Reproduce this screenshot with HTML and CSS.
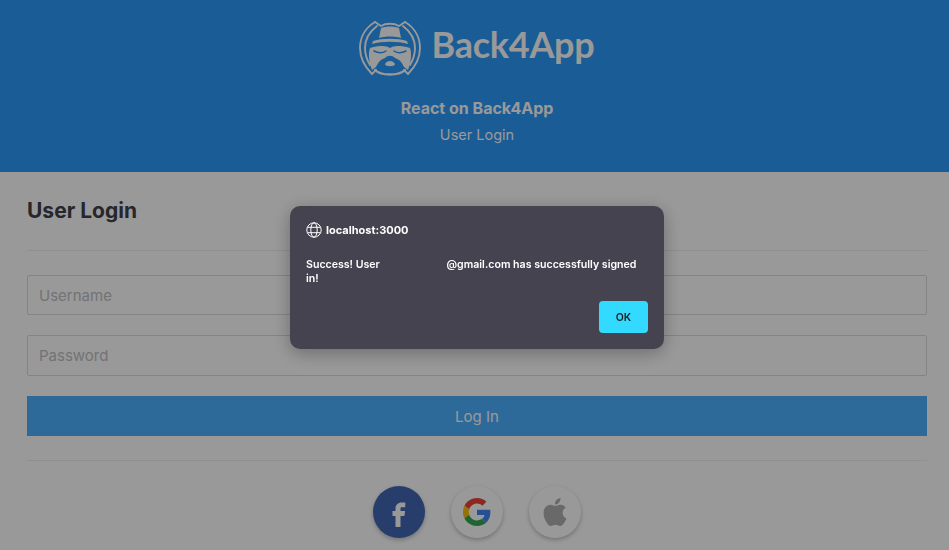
FILE: index.html
```html
<!DOCTYPE html>
<html lang="en">
<head>
    <meta charset="UTF-8">
    <meta name="viewport" content="width=device-width, initial-scale=1.0">
    <title>User Login</title>
    <link rel="stylesheet" href="styles.css">
</head>
<body>
    <div class="header">
        <div class="brand">
            <svg class="brand-logo" viewBox="0 0 62 56" width="62" height="56" fill="none" stroke="#fff" stroke-width="1.9" stroke-linecap="round" stroke-linejoin="round">
                <path d="M16 2C6 8 1 18 1 28c0 9 5 19 12 26l4-4"/>
                <path d="M46 2c10 6 15 16 15 26 0 9-5 19-12 26l-4-4"/>
                <path d="M18 6C10 12 6 20 6 28c0 6 2 12 5 17"/>
                <path d="M44 6c8 6 12 14 12 22 0 6-2 12-5 17"/>
                <path d="M16 2l6 4c5-3 13-3 18 0l6-4"/>
                <path d="M16 50c6 6 24 6 30 0" stroke-width="2.400"/>
                <path fill="#fff" stroke="none" d="M22 8c5-2 13-2 18 0l2 10c-7-2-15-2-22 0z"/>
                <path fill="#fff" stroke="none" d="M14 21c9-3 25-3 34 0l1 3c-10-3-26-3-36 0z"/>
                <path fill="#fff" stroke="none" d="M11 28c3-1 7-2 10-2 3 0 7 0 10 2 3-2 7-2 10-2 3 0 7 1 10 2 2 6 1 14-2 22l-4-3c-2-5-5-8-9-9-3-3-7-3-10 0-4 1-7 4-9 9l-4 3c-3-8-4-16-2-22z"/>
                <path stroke="#2b99fa" stroke-width="1.500" d="M15 31c4 2 9 2 12 0M47 31c-4 2-9 2-12 0"/>
                <path fill="#fff" stroke="none" d="M26 44c2-4 8-4 10 0 0 3-10 3-10 0z"/>
            </svg>
            <span class="brand-name">Back4App</span>
        </div>
        <p class="header-title">React on Back4App</p>
        <p class="header-sub">User Login</p>
    </div>

    <div class="container">
        <h2 class="heading">User Login</h2>
        <hr class="divider">
        <div class="form">
            <input class="form-input" type="text" placeholder="Username">
            <input class="form-input form-input-tall" type="password" placeholder="Password">
            <button class="form-button">Log In</button>
        </div>
        <hr class="divider divider-bottom">
        <div class="social">
            <div class="social-button social-facebook">
                <svg viewBox="0 0 24 24" width="30" height="30" fill="#fff"><path d="M14 8.200h3V4.300h-3c-2.800 0-4.800 2-4.800 4.800v2.100H6.800v3.900h2.400v8.900h4v-8.900h3.100l.6-3.900h-3.700V9.200c0-.6.2-1 .8-1z"/></svg>
            </div>
            <div class="social-button">
                <svg viewBox="0 0 48 48" width="28" height="28"><path fill="#EA4335" d="M24 9.500c3.540 0 6.710 1.220 9.210 3.600l6.850-6.850C35.900 2.380 30.470 0 24 0 14.620 0 6.510 5.380 2.560 13.220l7.980 6.190C12.430 13.720 17.740 9.500 24 9.500z"/><path fill="#4285F4" d="M46.980 24.550c0-1.570-.15-3.090-.38-4.550H24v9.020h12.940c-.58 2.960-2.260 5.480-4.780 7.180l7.730 6c4.510-4.180 7.090-10.360 7.090-17.650z"/><path fill="#FBBC05" d="M10.530 28.590c-.48-1.450-.76-2.990-.76-4.590s.27-3.140.76-4.590l-7.980-6.190C.92 16.460 0 20.120 0 24c0 3.880.92 7.540 2.560 10.780l7.970-6.190z"/><path fill="#34A853" d="M24 48c6.480 0 11.930-2.130 15.890-5.810l-7.730-6c-2.150 1.450-4.920 2.300-8.160 2.300-6.260 0-11.570-4.220-13.470-9.910l-7.980 6.190C6.510 42.620 14.620 48 24 48z"/></svg>
            </div>
            <div class="social-button">
                <svg viewBox="0 0 24 24" width="28" height="28" fill="#b0b0b0"><path d="M12.152 6.896c-.948 0-2.415-1.078-3.960-1.040-2.040.027-3.910 1.183-4.961 3.014-2.117 3.675-.546 9.103 1.519 12.090 1.013 1.454 2.208 3.090 3.792 3.039 1.520-.065 2.090-.987 3.935-.987 1.831 0 2.350.987 3.960.948 1.637-.026 2.676-1.480 3.676-2.948 1.156-1.688 1.636-3.325 1.662-3.415-.039-.013-3.182-1.221-3.220-4.857-.026-3.040 2.480-4.494 2.597-4.559-1.429-2.090-3.623-2.324-4.390-2.376-2-.156-3.675 1.090-4.610 1.090zM15.530 3.830c.843-1.012 1.400-2.427 1.245-3.830-1.207.052-2.662.805-3.532 1.818-.780.896-1.454 2.338-1.273 3.714 1.338.104 2.715-.688 3.559-1.701"/></svg>
            </div>
        </div>
    </div>

    <!-- dimmed page + browser alert on top -->
    <div class="overlay"></div>
    <div class="alert">
        <div class="alert-origin">
            <svg viewBox="0 0 16 16" width="16" height="16" fill="none" stroke="#fff" stroke-width="1"><circle cx="8" cy="8" r="7.200"/><ellipse cx="8" cy="8" rx="3.200" ry="7.200"/><path d="M1.500 5.300h13M1.500 10.700h13"/></svg>
            <span>localhost:3000</span>
        </div>
        <p class="alert-text">Success! User&nbsp;&nbsp;&nbsp;&nbsp;&nbsp;&nbsp;&nbsp;&nbsp;&nbsp;&nbsp;&nbsp;&nbsp;&nbsp;&nbsp;&nbsp;&nbsp;&nbsp;&nbsp;&nbsp;&nbsp;&nbsp;&nbsp;&nbsp;&nbsp;&nbsp;@gmail.com has successfully signed in!</p>
        <div class="alert-actions">
            <button class="alert-ok">OK</button>
        </div>
    </div>
</body>
</html>
```

FILE: styles.css
```css
html, body {
    height: 100%;
    margin: 0;
    padding: 0;
    overflow: hidden;
}

body {
    font-family: Inter, "Liberation Sans", sans-serif;
    background-color: #fff;
    color: #212529;
}

.header {
    height: 172px;
    box-sizing: border-box;
    padding: 20px 0 0 5px;
    background-color: #2b99fa;
    color: #fff;
    text-align: center;
}

.brand {
    display: flex;
    justify-content: center;
    align-items: center;
    gap: 10px;
    height: 56px;
}

.brand-name {
    margin-top: -8px;
    font-family: Lato, sans-serif;
    font-size: 36px;
    font-weight: 700;
    letter-spacing: -0.25px;
}

.header-title {
    margin: 23px 0 0;
    font-size: 16px;
    font-weight: 700;
    line-height: 19px;
}

.header-sub {
    margin: 7px 0 0;
    font-size: 14.500px;
    line-height: 19px;
}

.container {
    padding: 0 22px 0 27px;
}

.heading {
    margin: 26px 0 0;
    color: #40404a;
    font-size: 21px;
    font-weight: 700;
    line-height: 26px;
}

.divider {
    margin: 26px 0 0;
    border: 0;
    border-top: 1px solid #eee;
}

.divider-bottom {
    margin-top: 24px;
}

.form {
    display: flex;
    flex-direction: column;
    gap: 20px;
    margin-top: 24px;
}

.form-input {
    height: 40px;
    box-sizing: border-box;
    padding: 0 11px;
    border: 1px solid #dcdcdc;
    border-radius: 2px;
    font-family: inherit;
    font-size: 15px;
    background: #fff;
}

.form-input-tall {
    height: 41px;
}

.form-input::placeholder {
    color: #c0c0c4;
}

.form-button {
    height: 40px;
    border: none;
    background-color: #4eb1ff;
    color: #fff;
    font-family: inherit;
    font-size: 15px;
}

.social {
    display: flex;
    justify-content: center;
    gap: 26px;
    margin-top: 25px;
}

.social-button {
    display: flex;
    justify-content: center;
    align-items: center;
    width: 52px;
    height: 52px;
    border-radius: 50%;
    background-color: #fff;
    box-shadow: 0 2px 4px rgba(0, 0, 0, 0.25);
}

.social-facebook {
    background-color: #4267b2;
}

.overlay {
    position: fixed;
    top: 0;
    left: 0;
    width: 100%;
    height: 100%;
    background-color: rgba(0, 0, 0, 0.4);
}

.alert {
    position: fixed;
    top: 206px;
    left: 290px;
    width: 374px;
    height: 143px;
    box-sizing: border-box;
    padding: 16px;
    border-radius: 10px;
    background-color: #45434f;
    box-shadow: 0 4px 18px rgba(0, 0, 0, 0.3);
    color: #fff;
    font-size: 10.600px;
    font-weight: 600;
}

.alert-origin {
    display: flex;
    align-items: center;
    gap: 4px;
    font-size: 11px;
    font-weight: 700;
    height: 16px;
}

.alert-text {
    margin: 20px 0 0;
    line-height: 14px;
}

.alert-actions {
    display: flex;
    justify-content: flex-end;
    margin-top: 15px;
}

.alert-ok {
    width: 49px;
    height: 32px;
    border: none;
    border-radius: 4px;
    background-color: #33daff;
    color: #222;
    font-family: inherit;
    font-size: 10.500px;
    font-weight: 600;
}
```
